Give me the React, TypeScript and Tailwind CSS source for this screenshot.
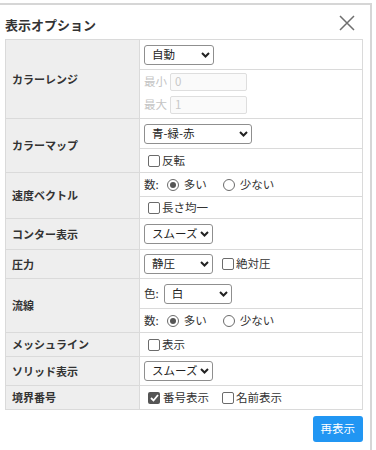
import React from 'react';

const Chevron = () => (
  <svg width="9" height="6" viewBox="0 0 9 6" className="shrink-0">
    <polyline points="1,1 4.5,4.5 8,1" fill="none" stroke="#222" strokeWidth="2" />
  </svg>
);

const Select: React.FC<{ value: string; className: string }> = ({ value, className }) => (
  <div
    className={`flex items-center justify-between h-[20px] border border-[#8f8f8f] rounded-[3px] bg-white pl-[7px] pr-[3px] text-[11.5px] text-[#222] ${className}`}
  >
    <span className="leading-none">{value}</span>
    <Chevron />
  </div>
);

const Check: React.FC<{ checked?: boolean }> = ({ checked }) =>
  checked ? (
    <span className="w-[12px] h-[12px] rounded-[2px] bg-[#555] flex items-center justify-center shrink-0">
      <svg width="9" height="8" viewBox="0 0 9 8">
        <polyline points="1,4 3.5,6.5 8,1" fill="none" stroke="#fff" strokeWidth="1.8" />
      </svg>
    </span>
  ) : (
    <span className="w-[12px] h-[12px] rounded-[2px] border border-[#6b6b6b] bg-white shrink-0" />
  );

const Radio: React.FC<{ checked?: boolean }> = ({ checked }) => (
  <span className="w-[12px] h-[12px] rounded-full border border-[#6b6b6b] bg-white flex items-center justify-center shrink-0">
    {checked && <span className="w-[6px] h-[6px] rounded-full bg-[#555]" />}
  </span>
);

const Count = () => (
  <div className="flex items-center">
    <span>数:</span>
    <span className="ml-[8px]"><Radio checked /></span>
    <span className="ml-[5px]">多い</span>
    <span className="ml-[16px]"><Radio /></span>
    <span className="ml-[5px]">少ない</span>
  </div>
);

const Disabled: React.FC<{ label: string; value: string }> = ({ label, value }) => (
  <div className="flex items-center gap-[3px]">
    <span className="text-[#c4c4c4]">{label}</span>
    <span className="w-[77px] h-[18px] border border-[#dedede] rounded-[2px] bg-[#fafafa] pl-[4px] text-[#c8c8c8] flex items-center">
      {value}
    </span>
  </div>
);

const Row: React.FC<{ label: string; children: React.ReactNode }> = ({ label, children }) => (
  <div className="flex border-b border-[#dadada]">
    <div className="w-[134px] shrink-0 bg-[#eeeeee] border-r border-[#dadada] flex items-center pl-[6px] font-bold text-[11px] text-[#333]">
      {label}
    </div>
    <div className="flex-1 flex flex-col">{children}</div>
  </div>
);

const Sub: React.FC<{ h: string; top?: boolean; children: React.ReactNode }> = ({ h, top, children }) => (
  <div className={`${h} flex items-center pl-[4px] ${top ? 'border-t border-[#dadada]' : ''}`}>{children}</div>
);

export default function App() {
  return (
    <div
      className="w-[376px] h-[450px] bg-white pt-[3px] overflow-hidden text-[#333] text-[11.5px]"
      style={{ fontFamily: '"Noto Sans CJK JP", "Noto Sans", sans-serif' }}
    >
      <div className="w-[372px] h-[447px] border-t-2 border-r-2 border-[#d6d6d6] px-[5px]">
        <div className="relative h-[34px] pt-[11px]">
          <h1 className="text-[13px] font-bold leading-[18px] text-[#333]">表示オプション</h1>
          <svg width="16" height="16" viewBox="0 0 16 16" className="absolute left-[334px] top-[10px]">
            <path d="M1 1 L15 15 M15 1 L1 15" stroke="#6f6f6f" strokeWidth="1.5" fill="none" />
          </svg>
        </div>

        <div className="w-[358px] border-t border-x border-[#dadada]">
          <Row label="カラーレンジ">
            <Sub h="h-[29px]">
              <Select value="自動" className="w-[70px]" />
            </Sub>
            <div className="h-[49px] border-t border-[#dadada] flex flex-col justify-center gap-[5px] pl-[4px] pb-[1px]">
              <Disabled label="最小" value="0" />
              <Disabled label="最大" value="1" />
            </div>
          </Row>

          <Row label="カラーマップ">
            <Sub h="h-[29px]">
              <Select value="青-緑-赤" className="w-[108px]" />
            </Sub>
            <Sub h="h-[24px]" top>
              <span className="ml-[4px] flex items-center gap-[2px]">
                <Check />
                <span>反転</span>
              </span>
            </Sub>
          </Row>

          <Row label="速度ベクトル">
            <Sub h="h-[23px]">
              <Count />
            </Sub>
            <Sub h="h-[22px]" top>
              <span className="ml-[4px] flex items-center gap-[2px]">
                <Check />
                <span>長さ均一</span>
              </span>
            </Sub>
          </Row>

          <Row label="コンター表示">
            <Sub h="h-[30px]">
              <Select value="スムーズ" className="w-[69px]" />
            </Sub>
          </Row>

          <Row label="圧力">
            <Sub h="h-[28px]">
              <Select value="静圧" className="w-[69px]" />
              <span className="ml-[9px] flex items-center gap-[2px]">
                <Check />
                <span>絶対圧</span>
              </span>
            </Sub>
          </Row>

          <Row label="流線">
            <Sub h="h-[29px]">
              <span>色:</span>
              <Select value="白" className="w-[68px] ml-[5px]" />
            </Sub>
            <Sub h="h-[24px]" top>
              <Count />
            </Sub>
          </Row>

          <Row label="メッシュライン">
            <Sub h="h-[23px]">
              <span className="ml-[4px] flex items-center gap-[2px]">
                <Check />
                <span>表示</span>
              </span>
            </Sub>
          </Row>

          <Row label="ソリッド表示">
            <Sub h="h-[28px]">
              <Select value="スムーズ" className="w-[69px]" />
            </Sub>
          </Row>

          <Row label="境界番号">
            <Sub h="h-[23px]">
              <span className="ml-[4px] flex items-center gap-[3px]">
                <Check checked />
                <span>番号表示</span>
              </span>
              <span className="ml-[13px] flex items-center gap-[2px]">
                <Check />
                <span>名前表示</span>
              </span>
            </Sub>
          </Row>
        </div>

        <div className="flex justify-end w-[358px] mt-[6px]">
          <button className="h-[26px] px-[8px] rounded-[3px] bg-[#2196f3] text-white text-[11.5px]">再表示</button>
        </div>
      </div>
    </div>
  );
}
